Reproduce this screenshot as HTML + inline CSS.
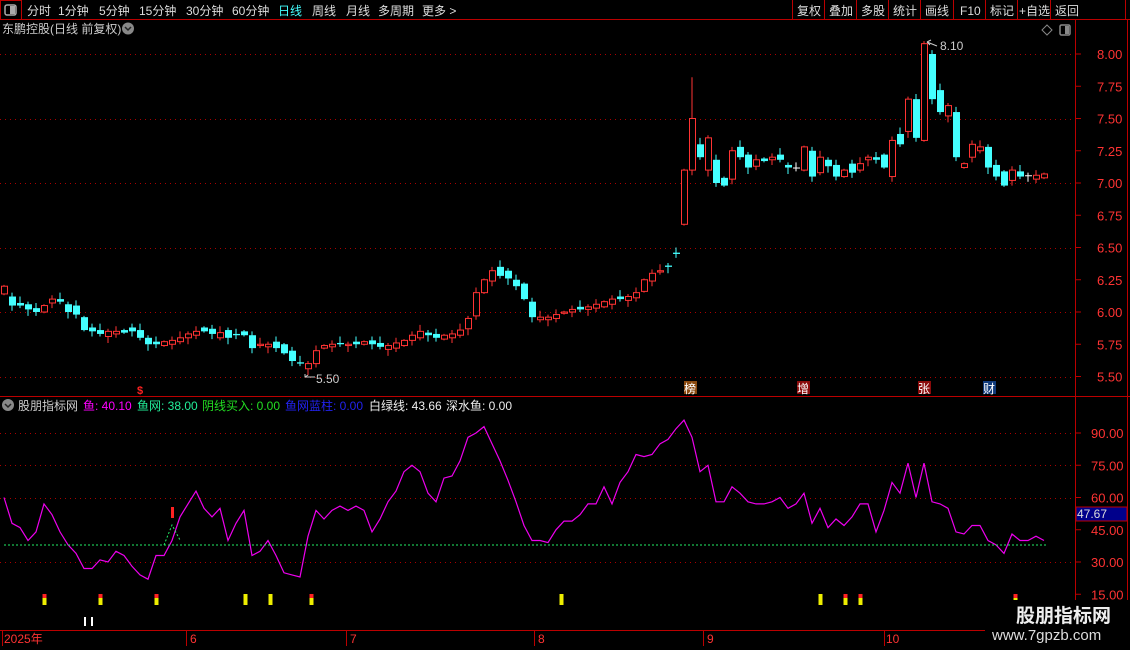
<!DOCTYPE html>
<html><head><meta charset="utf-8"><style>
body{margin:0;background:#000;width:1130px;height:650px;overflow:hidden;font-family:"Liberation Sans","Noto Sans CJK SC",sans-serif}
svg{position:absolute;left:0;top:0}
text{font-family:"Liberation Sans","Noto Sans CJK SC",sans-serif}
</style></head><body>
<svg id="s" width="1130" height="650" xmlns="http://www.w3.org/2000/svg">
<rect width="1130" height="650" fill="#000"/>
<line x1="0" y1="19.5" x2="1130" y2="19.5" stroke="#b00" />
<rect x="0.5" y="0.5" width="21" height="19" fill="none" stroke="#b00"/>
<rect x="5" y="5" width="11" height="10" rx="2" fill="none" stroke="#aaa" stroke-width="1.5"/><rect x="10" y="6" width="5" height="8" fill="#aaa"/>
<g font-size="12" fill="#ddd">
<text x="27" y="15">分时</text><text x="58" y="15">1分钟</text><text x="99" y="15">5分钟</text><text x="139" y="15">15分钟</text><text x="186" y="15">30分钟</text><text x="232" y="15">60分钟</text>
<text x="278" y="15" fill="#4ff">日线</text><text x="312" y="15">周线</text><text x="346" y="15">月线</text><text x="378" y="15">多周期</text><text x="422" y="15">更多 &gt;</text>
</g>
<g stroke="#b00"><line x1="792.5" y1="0" x2="792.5" y2="19"/><line x1="824.5" y1="0" x2="824.5" y2="19"/><line x1="856.5" y1="0" x2="856.5" y2="19"/><line x1="888.5" y1="0" x2="888.5" y2="19"/><line x1="920.5" y1="0" x2="920.5" y2="19"/><line x1="953.5" y1="0" x2="953.5" y2="19"/><line x1="985.5" y1="0" x2="985.5" y2="19"/><line x1="1017.5" y1="0" x2="1017.5" y2="19"/><line x1="1050.5" y1="0" x2="1050.5" y2="19"/><line x1="1125.5" y1="0" x2="1125.5" y2="19"/></g>
<g font-size="12" fill="#ddd"><text x="797" y="15">复权</text><text x="829" y="15">叠加</text><text x="861" y="15">多股</text><text x="893" y="15">统计</text><text x="925" y="15">画线</text><text x="960" y="15">F10</text><text x="990" y="15">标记</text><text x="1019" y="15">+自选</text><text x="1055" y="15">返回</text></g>
<text x="2" y="33" font-size="12" fill="#ccc">东鹏控股(日线 前复权)</text>
<circle cx="128" cy="28.5" r="6" fill="#888"/><path d="M125 27l3 3 3-3" stroke="#222" stroke-width="1.5" fill="none"/>
<path d="M1047 25l5 5-5 5-5-5z" fill="none" stroke="#888"/>
<rect x="1060" y="25" width="10" height="10" rx="1.5" fill="none" stroke="#888" stroke-width="1.5"/><rect x="1065" y="26" width="4" height="8" fill="#888"/>
<line x1="1075.5" y1="20" x2="1075.5" y2="650" stroke="#b00"/>
<line x1="1127.5" y1="20" x2="1127.5" y2="650" stroke="#b00"/>
<line x1="0" y1="396.5" x2="1130" y2="396.5" stroke="#b00"/>
<line x1="0" y1="630.5" x2="1075" y2="630.5" stroke="#b00"/>
<g id="grid"></g><g id="cand"></g><g id="ind"></g>
<text x="940" y="50" font-size="12" fill="#ccc">8.10</text><path d="M927 42l4-2M927 42l3 3M927 42l10 4" stroke="#ccc" fill="none"/>
<text x="316" y="383" font-size="12" fill="#ccc">5.50</text><path d="M305 374v3h10M305 377l3-2" stroke="#ccc" fill="none"/>
<text x="137" y="394" font-size="11" fill="#f22" font-weight="bold">$</text>
<rect x="684" y="381" width="13" height="13" fill="#8a4a10"/><text x="684" y="393" font-size="12" fill="#fff">榜</text>
<rect x="797" y="381" width="13" height="13" fill="#8a0a0a"/><text x="797" y="393" font-size="12" fill="#fff">增</text>
<rect x="918" y="381" width="13" height="13" fill="#8a0a0a"/><text x="918" y="393" font-size="12" fill="#fff">张</text>
<rect x="983" y="381" width="13" height="13" fill="#103a7a"/><text x="983" y="393" font-size="12" fill="#fff">财</text>
<circle cx="8" cy="405" r="6" fill="#888"/><path d="M5 404l3 3 3-3" stroke="#222" stroke-width="1.5" fill="none"/>
<g font-size="12"><text x="18" y="410" fill="#ccc">股朋指标网</text><text x="83" y="410" fill="#f0f">鱼: 40.10</text><text x="137" y="410" fill="#2e9">鱼网: 38.00</text><text x="202" y="410" fill="#2d2">阴线买入: 0.00</text><text x="285" y="410" fill="#22e">鱼网蓝柱: 0.00</text><text x="369" y="410" fill="#eee">白绿线: 43.66</text><text x="446" y="410" fill="#eee">深水鱼: 0.00</text></g>
<rect x="1076" y="507" width="51" height="14" fill="#00008b" stroke="#b00"/><text x="1077" y="518" font-size="12" fill="#ddd">47.67</text>
<g font-size="12" fill="#f33"><text x="4" y="643">2025年</text><text x="190" y="643">6</text><text x="350" y="643">7</text><text x="538" y="643">8</text><text x="707" y="643">9</text><text x="886" y="643">10</text></g>
<g stroke="#b00"><line x1="2.5" y1="630" x2="2.5" y2="646"/><line x1="186.5" y1="630" x2="186.5" y2="646"/><line x1="346.5" y1="630" x2="346.5" y2="646"/><line x1="534.5" y1="630" x2="534.5" y2="646"/><line x1="703.5" y1="630" x2="703.5" y2="646"/><line x1="884.5" y1="630" x2="884.5" y2="646"/></g>
<rect x="985" y="600" width="145" height="50" fill="#000"/>
<text x="1016" y="622" font-size="19" font-weight="bold" fill="#eee">股朋指标网</text>
<text x="992" y="640" font-size="15" fill="#ddd">www.7gpzb.com</text>
</svg>
<script>
var NS="http://www.w3.org/2000/svg";
function el(g,t,a){var e=document.createElementNS(NS,t);for(var k in a)e.setAttribute(k,a[k]);document.getElementById(g).appendChild(e);return e;}
function py(p){return 54+(8-p)*129;}
function iy(v){return 433+(90-v)*2.15;}
[8,7.5,7,6.5,6,5.5].forEach(function(p){el("grid","line",{x1:0,x2:1075,y1:Math.round(py(p))+.5,y2:Math.round(py(p))+.5,stroke:"#a00","stroke-dasharray":"1 4"});});
[8,7.75,7.5,7.25,7,6.75,6.5,6.25,6,5.75,5.5].forEach(function(p){var y=py(p);el("grid","line",{x1:1075,x2:1081,y1:y,y2:y,stroke:"#b00"});var t=el("grid","text",{x:1097,y:y+5,"font-size":13,fill:"#f33"});t.textContent=p.toFixed(2);});
[90,75,60,45,30,15].forEach(function(v){var y=iy(v);if(v%30==0||v==75)el("grid","line",{x1:0,x2:1075,y1:Math.round(y)+.5,y2:Math.round(y)+.5,stroke:"#a00","stroke-dasharray":"1 4"});el("grid","line",{x1:1075,x2:1081,y1:y,y2:y,stroke:"#b00"});var t=el("grid","text",{x:1091,y:y+5,"font-size":13,fill:"#f33"});t.textContent=v.toFixed(2);});
var C=[6.20,6.05,6.05,6.02,6.0,6.05,6.1,6.08,6.0,5.98,5.86,5.85,5.83,5.85,5.85,5.84,5.85,5.80,5.75,5.75,5.77,5.78,5.80,5.83,5.85,5.85,5.83,5.84,5.80,5.82,5.82,5.72,5.75,5.75,5.72,5.68,5.62,5.6,5.6,5.70,5.74,5.75,5.75,5.75,5.75,5.77,5.75,5.73,5.74,5.76,5.78,5.82,5.85,5.82,5.80,5.82,5.83,5.86,5.95,6.15,6.25,6.32,6.28,6.26,6.2,6.1,5.96,5.96,5.96,5.98,6.0,6.02,6.02,6.04,6.06,6.08,6.10,6.1,6.12,6.15,6.25,6.3,6.32,6.35,6.45,7.1,7.5,7.2,7.35,7.0,6.98,7.25,7.2,7.12,7.18,7.17,7.2,7.18,7.12,7.12,7.28,7.05,7.2,7.13,7.05,7.1,7.08,7.15,7.2,7.18,7.12,7.33,7.30,7.65,7.35,8.08,7.65,7.55,7.6,7.2,7.15,7.3,7.28,7.12,7.05,6.98,7.1,7.05,7.06,7.06,7.07];
var O=[6.14,6.12,6.07,6.06,6.03,6.0,6.07,6.1,6.06,6.05,5.96,5.88,5.86,5.81,5.83,5.86,5.88,5.86,5.80,5.77,5.74,5.75,5.77,5.80,5.82,5.88,5.87,5.80,5.86,5.83,5.85,5.82,5.74,5.73,5.77,5.75,5.70,5.61,5.56,5.60,5.72,5.73,5.76,5.74,5.77,5.75,5.78,5.76,5.71,5.72,5.74,5.78,5.80,5.84,5.83,5.79,5.80,5.82,5.87,5.97,6.15,6.24,6.35,6.32,6.25,6.22,6.08,5.94,5.94,5.95,5.99,6.0,6.04,6.02,6.03,6.04,6.06,6.12,6.09,6.11,6.16,6.24,6.31,6.36,6.46,6.68,7.1,7.3,7.1,7.18,7.04,7.03,7.28,7.22,7.13,7.19,7.18,7.22,7.14,7.12,7.1,7.25,7.08,7.18,7.14,7.05,7.15,7.1,7.18,7.2,7.22,7.05,7.38,7.4,7.65,7.33,8.0,7.72,7.52,7.55,7.12,7.2,7.25,7.28,7.14,7.09,7.02,7.09,7.06,7.03,7.04];
for(var i=0;i<C.length;i++){var x=4+i*8.0,o=O[i]||C[i],c=C[i];var up=c>o,col=up?"#f33":(Math.abs(c-o)<0.005?"#fff":"#4ff");var hi=Math.max(o,c)+0.01+((i*37)%5)*0.01,lo=Math.min(o,c)-0.01-((i*53)%5)*0.01;if(i==86)hi=7.82;if(i==115)hi=8.1;
el("cand","line",{x1:x,x2:x,y1:py(hi),y2:py(lo),stroke:col});var y1=py(Math.max(o,c)),h=Math.max(1,py(Math.min(o,c))-y1);
if(up)el("cand","rect",{x:x-2.5,y:y1,width:6,height:h,fill:"#000",stroke:col});else el("cand","rect",{x:x-3,y:y1,width:7,height:h,fill:col});}
var V=[60,48,46,40,44,57,52,44,38,34,27,27,31,30,35,33,28,24,22,33,33,40,51,57,63,55,51,55,40,48,54,33,35,40,33,25,24,23,42,54,50,54,56,54,56,54,44,50,58,63,72,75,72,62,58,69,70,77,88,90,93,85,77,68,58,47,40,40,39,45,49,49,52,57,57,65,57,67,72,80,79,80,85,87,92,96,88,72,75,58,58,65,62,58,57,57,58,60,55,57,62,48,55,46,50,47,51,57,57,44,54,67,62,76,60,76,58,57,55,44,43,47,47,40,38,34,43,40,40,42,40];
var pts=V.map(function(v,i){return (4+i*8)+","+iy(v).toFixed(1);}).join(" ");
el("ind","polyline",{points:pts,fill:"none",stroke:"#e0e","stroke-width":1.2});
el("ind","line",{x1:4,x2:1047,y1:545,y2:545,stroke:"#2e6","stroke-dasharray":"2 2"});
el("ind","polyline",{points:"164,545 172,525 180,540",fill:"none",stroke:"#2e6","stroke-dasharray":"2 2"});
el("ind","rect",{x:171,y:507,width:3,height:11,fill:"#f22"});
[44,100,156,245,270,311,561,820,845,860,1015].forEach(function(x,k){var r=[0,1,2,5,8,9,10].indexOf(k)>=0;el("ind","rect",{x:x-1.5,y:594,width:4,height:11,fill:"#ee0"});if(r)el("ind","rect",{x:x-1.5,y:594,width:4,height:4,fill:"#f22"});});
el("ind","rect",{x:84,y:617,width:2,height:9,fill:"#fff"});el("ind","rect",{x:91,y:617,width:2,height:9,fill:"#fff"});
</script>
</body></html>
